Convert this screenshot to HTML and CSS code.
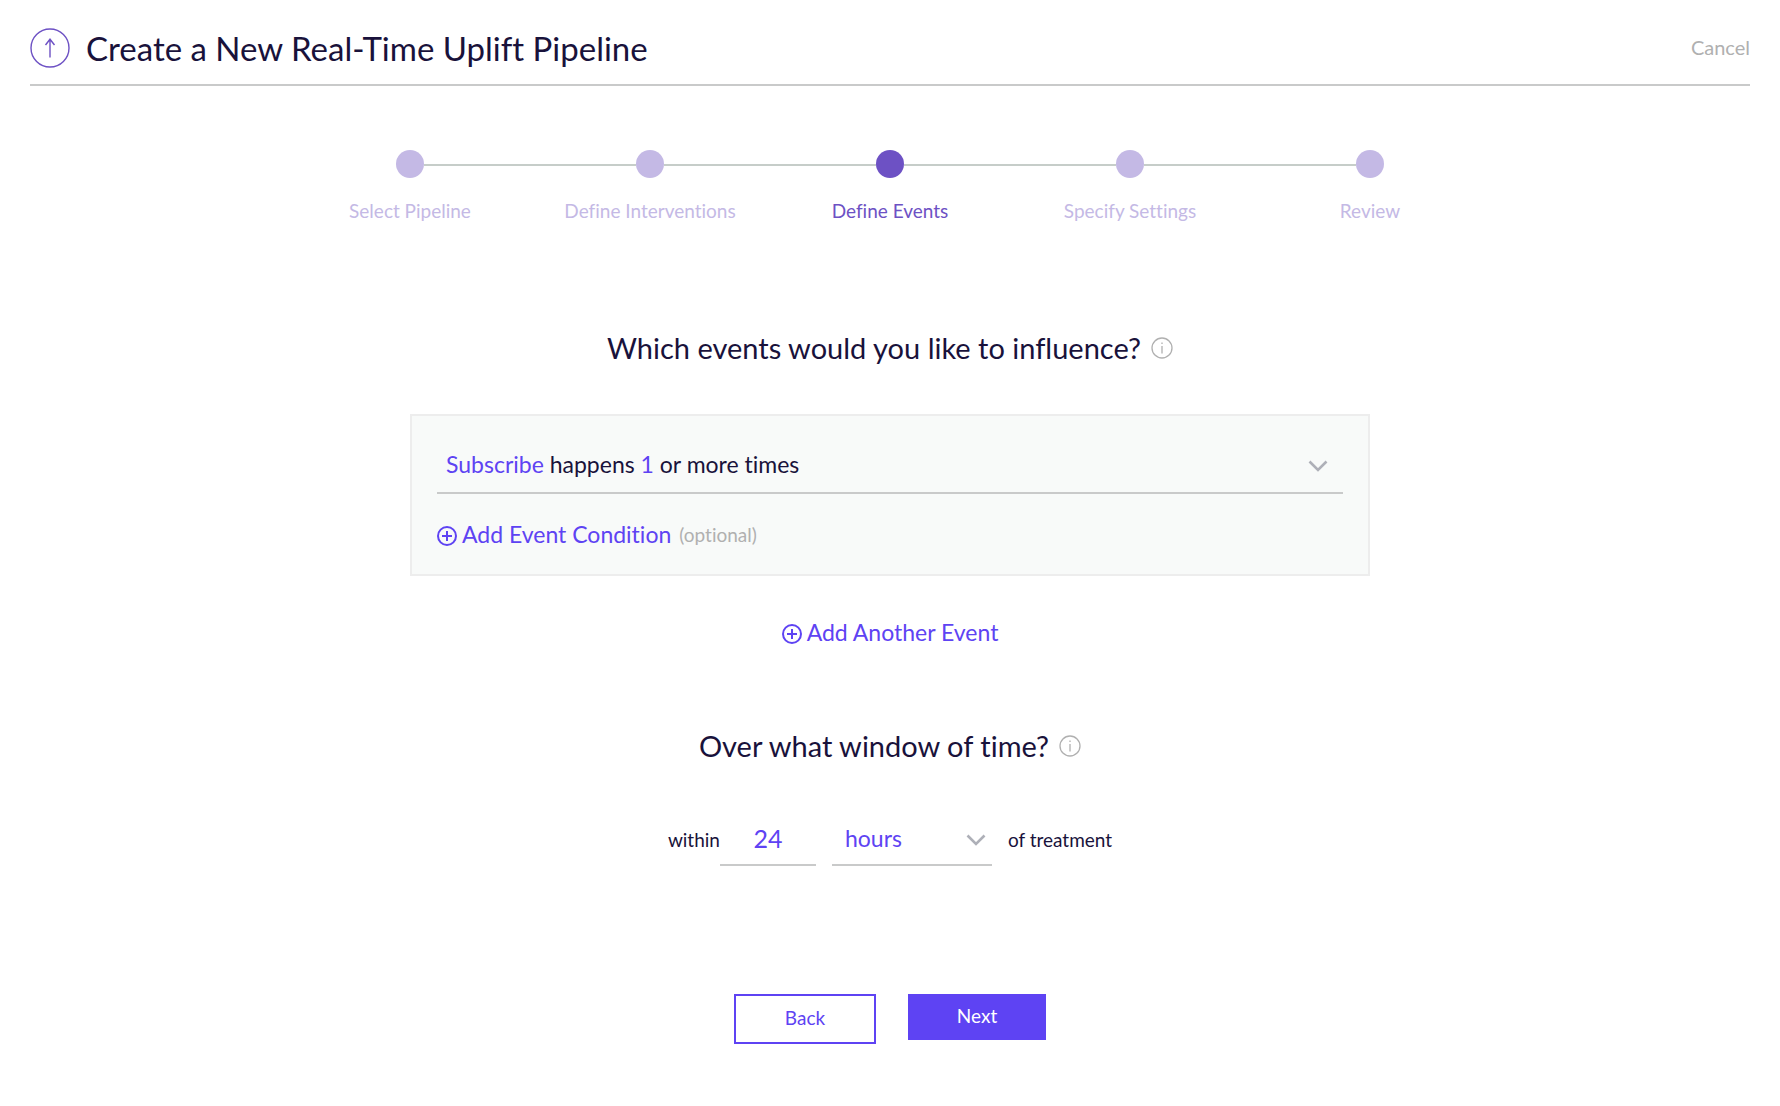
FILE: index.html
```html
<!DOCTYPE html>
<html lang="en">
<head>
    <meta charset="UTF-8">
    <meta name="viewport" content="width=device-width, initial-scale=1.0">
    <title>Create a New Real-Time Uplift Pipeline</title>
    <link rel="stylesheet" href="styles.css">
</head>
<body>
    <header class="header">
        <svg class="logo" viewBox="0 0 40 40" aria-hidden="true">
            <circle cx="20" cy="20" r="19"></circle>
            <path d="M20 29.5V11.5M15.5 17L20 11.2L24.5 17"></path>
        </svg>
        <h1>Create a New Real-Time Uplift Pipeline</h1>
        <a class="cancel" href="#">Cancel</a>
    </header>

    <ol class="steps">
        <li><span class="dot"></span>Select Pipeline</li>
        <li><span class="dot"></span>Define Interventions</li>
        <li class="active" aria-current="step"><span class="dot"></span>Define Events</li>
        <li><span class="dot"></span>Specify Settings</li>
        <li><span class="dot"></span>Review</li>
    </ol>

    <form class="content">
        <div class="question">
            <h2>Which events would you like to influence?</h2>
            <svg class="info" viewBox="0 0 22 22" aria-hidden="true">
                <circle cx="11" cy="11" r="10"></circle>
                <path d="M11 9V16.5M11 5.5V7"></path>
            </svg>
        </div>

        <div class="event-card">
            <button type="button" class="event-row">
                <span><span class="value">Subscribe</span> happens <span class="value">1</span> or more times</span>
                <svg class="chevron" viewBox="0 0 20 12" aria-hidden="true"><path d="M1.5 1.5L10 10L18.5 1.5"></path></svg>
            </button>
            <div class="condition">
                <button type="button" class="add">
                    <svg class="plus" viewBox="0 0 20 20" aria-hidden="true">
                        <circle cx="10" cy="10" r="9"></circle>
                        <path d="M10 5V15M5 10H15"></path>
                    </svg>
                    Add Event Condition
                </button>
                <span class="optional">(optional)</span>
            </div>
        </div>

        <button type="button" class="add add-event">
            <svg class="plus" viewBox="0 0 20 20" aria-hidden="true">
                <circle cx="10" cy="10" r="9"></circle>
                <path d="M10 5V15M5 10H15"></path>
            </svg>
            Add Another Event
        </button>

        <div class="question">
            <h2>Over what window of time?</h2>
            <svg class="info" viewBox="0 0 22 22" aria-hidden="true">
                <circle cx="11" cy="11" r="10"></circle>
                <path d="M11 9V16.5M11 5.5V7"></path>
            </svg>
        </div>

        <div class="window">
            <label for="amount">within</label>
            <input type="text" id="amount" value="24">
            <div class="unit">
                <select id="unit">
                    <option>hours</option>
                </select>
                <svg class="chevron" viewBox="0 0 20 12" aria-hidden="true"><path d="M1.5 1.5L10 10L18.5 1.5"></path></svg>
            </div>
            <label for="unit">of treatment</label>
        </div>

        <div class="buttons">
            <button type="button" class="back">Back</button>
            <button type="submit" class="next">Next</button>
        </div>
    </form>
</body>
</html>
```
FILE: styles.css
```css
* {
    box-sizing: border-box;
}
body {
    margin: 0;
    padding: 28px 30px;
    background: white;
    color: #19123b;
    font-family: Lato, sans-serif;
    font-size: 19px;
    font-variant-ligatures: none;
}
h1, h2 {
    margin: 0;
    font-weight: 400;
}
button, input, select {
    margin: 0;
    padding: 0;
    border: none;
    border-radius: 0;
    background: none;
    color: inherit;
    font: inherit;
    font-variant-ligatures: none;
    cursor: pointer;
}
svg {
    flex: none;
    fill: none;
}
.header {
    display: flex;
    align-items: center;
    gap: 16px;
    padding-bottom: 16px;
    border-bottom: 2px solid #c9caca;
}
.header h1 {
    flex: 1;
    font-size: 33px;
    line-height: 40px;
}
.logo {
    width: 40px;
    height: 40px;
    stroke: #6d51c4;
    stroke-width: 1.4;
}
.cancel {
    padding-bottom: 2px;
    color: #b0b0b0;
    font-size: 20px;
    text-decoration: none;
}

.steps {
    display: flex;
    max-width: 1200px;
    margin: 64px auto 0;
    padding: 0;
    list-style: none;
    color: #c4b9e5;
}
.steps li {
    position: relative;
    display: flex;
    flex: 1;
    flex-direction: column;
    align-items: center;
    gap: 19px;
    line-height: 28px;
}
/* connector to the next step */
.steps li:not(:last-child)::after {
    content: "";
    position: absolute;
    top: 14px;
    left: calc(50% + 14px);
    width: calc(100% - 28px);
    height: 2px;
    background: #c6cdc9;
}
.dot {
    width: 28px;
    height: 28px;
    border-radius: 50%;
    background: #c4b9e5;
}
.steps .active {
    color: #6d51c4;
}
.active .dot {
    background: #6d51c4;
}

.content {
    display: flex;
    flex-direction: column;
    align-items: center;
    max-width: 960px;
    margin: 105px auto 0;
}
.question {
    display: flex;
    align-items: center;
    gap: 10px;
}
.question h2 {
    font-size: 29px;
    line-height: 36px;
}
.info {
    width: 22px;
    height: 22px;
    stroke: #b0b0b0;
    stroke-width: 1.3;
}
.event-card {
    width: 100%;
    margin-top: 48px;
    padding: 24px 25px;
    border: 2px solid #ededed;
    background: #f8faf9;
}
.event-row {
    display: flex;
    align-items: center;
    justify-content: space-between;
    width: 100%;
    height: 54px;
    padding: 0 15px 4px 9px;
    border-bottom: 2px solid #c9caca;
    font-size: 23px;
}
.value {
    color: #5e43f3;
}
.chevron {
    width: 20px;
    height: 12px;
    stroke: #aeb0b8;
    stroke-width: 2.6;
}
.event-row .chevron {
    margin-top: 4px;
}
.condition {
    display: flex;
    align-items: center;
    gap: 8px;
    margin: 26px 0 2px;
}
.add {
    display: flex;
    align-items: center;
    gap: 5px;
    color: #5e43f3;
    font-size: 23px;
    line-height: 28px;
}
.plus {
    width: 20px;
    height: 20px;
    margin-top: 4px;
    stroke: #5e43f3;
    stroke-width: 2;
}
.optional {
    color: #b0b0b0;
}
.add-event {
    margin: 42px 0 82px;
}
.window {
    display: flex;
    align-items: center;
    margin-top: 52px;
}
.window label {
    padding-bottom: 4px;
}
.window input {
    width: 96px;
    height: 50px;
    margin-right: 16px;
    padding-bottom: 4px;
    border-bottom: 2px solid #c9caca;
    color: #5e43f3;
    font-size: 25px;
    text-align: center;
    cursor: text;
}
.unit {
    position: relative;
    margin-right: 16px;
}
.unit select {
    width: 160px;
    height: 50px;
    padding: 0 0 4px 13px;
    border-bottom: 2px solid #c9caca;
    color: #5e43f3;
    font-size: 23px;
    appearance: none;
}
.unit .chevron {
    position: absolute;
    top: 18px;
    right: 6px;
    pointer-events: none;
}
.buttons {
    display: flex;
    align-items: flex-start;
    gap: 32px;
    margin-top: 128px;
}
.buttons button {
    padding-bottom: 4px;
}
.back {
    width: 142px;
    height: 50px;
    border: 2px solid #5e43f3;
    color: #5e43f3;
}
.next {
    width: 138px;
    height: 46px;
    background: #5e43f3;
    color: white;
}
```
